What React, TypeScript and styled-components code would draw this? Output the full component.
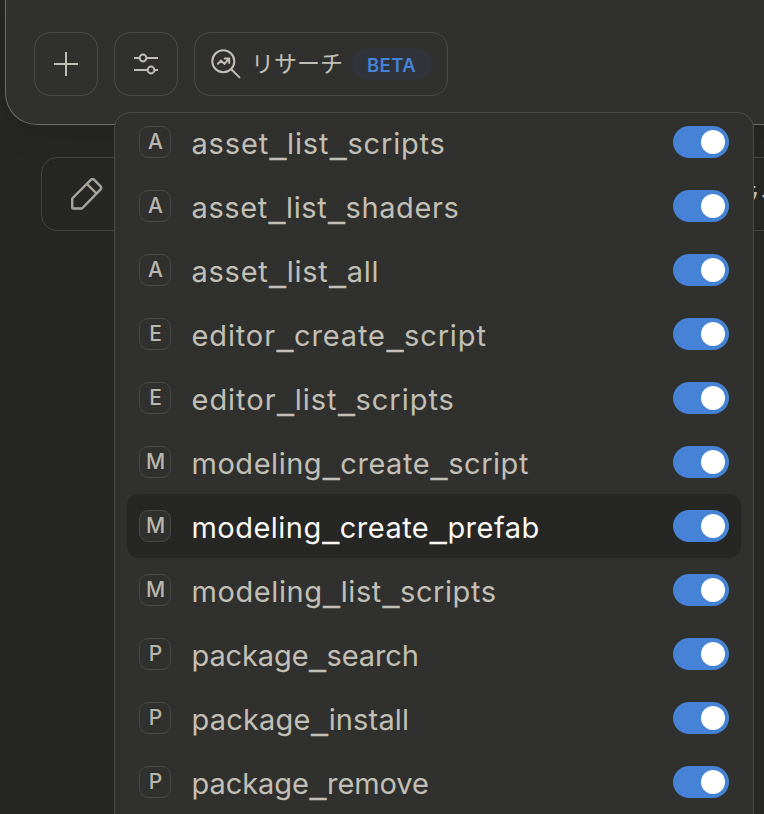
import React from "react";
import styled, { createGlobalStyle } from "styled-components";

const Global = createGlobalStyle`
  * { box-sizing: border-box; }
  body { margin: 0; background: #262624; overflow: hidden; }
`;

const Page = styled.main`
  position: relative;
  width: 764px;
  height: 814px;
  overflow: hidden;
  background: #262624;
  color: #c2c0b6;
  font-family: Inter, "Noto Sans CJK JP", sans-serif;
`;

const Composer = styled.section`
  display: flex;
  align-items: flex-end;
  gap: 16px;
  width: 800px;
  height: 125px;
  margin-left: 5px;
  padding: 0 28px 28px;
  background: #30302e;
  border: 1px solid #6a6a66;
  border-top: 0;
  border-bottom-left-radius: 32px;
  box-shadow: 0 4px 40px rgba(0, 0, 0, 0.09);
`;

const ToolButton = styled.button<{ $wide?: boolean }>`
  display: flex;
  align-items: center;
  justify-content: ${(p) => (p.$wide ? "flex-start" : "center")};
  width: ${(p) => (p.$wide ? 254 : 64)}px;
  height: 64px;
  padding: ${(p) => (p.$wide ? "0 15px" : "0")};
  border: 1px solid #4a4a47;
  border-radius: 16px;
  background: transparent;
  color: #c2c0b6;
  font: inherit;
  svg { flex: none; }
`;

const ToolLabel = styled.span`
  width: 95px;
  margin-left: 9px;
  padding-bottom: 4px;
  font: 400 23px/32px "Noto Sans CJK JP", sans-serif;
  white-space: nowrap;
  text-align: left;
`;

const Beta = styled.span`
  display: flex;
  align-items: center;
  width: 80px;
  height: 32px;
  margin-left: 6px;
  padding: 1px 0 0 15px;
  border-radius: 16px;
  background: #30343a;
  color: #4682d5;
  font-size: 18.5px;
  font-weight: 600;
  letter-spacing: 0.4px;
`;

const Suggestion = styled.section`
  display: flex;
  align-items: center;
  justify-content: space-between;
  width: 800px;
  height: 74px;
  margin: 32px 0 0 41px;
  padding: 0 28px 0 29px;
  border: 1px solid #434340;
  border-radius: 16px;
  color: #a8a69d;
`;

const SuggestionText = styled.span`
  width: 76px;
  color: #c2c0b6;
  font: 400 24px/32px "Noto Sans CJK JP", sans-serif;
  white-space: nowrap;
`;

const Menu = styled.div`
  position: absolute;
  left: 114px;
  top: 112px;
  width: 640px;
  height: 720px;
  overflow: hidden;
  padding: 0 12px;
  border: 1px solid #4a4a47;
  border-radius: 16px;
  background: #30302e;
`;

const List = styled.ul`
  margin: -3px 0 0;
  padding: 0;
  list-style: none;
`;

const Row = styled.li<{ $active?: boolean }>`
  display: flex;
  align-items: center;
  height: 64px;
  padding: 0 12px;
  border-radius: 12px;
  background: ${(p) => (p.$active ? "#262624" : "transparent")};
  color: ${(p) => (p.$active ? "#faf9f5" : "#c2c0b6")};
`;

const Initial = styled.span`
  display: grid;
  place-items: center;
  width: 32px;
  height: 32px;
  padding-left: 1px;
  border: 1px solid #484845;
  border-radius: 9px;
  background: #30302e;
  color: #b9b7ad;
  font-size: 21px;
  font-weight: 450;
  line-height: 30px;
`;

const ToolName = styled.span<{ $spacing: number }>`
  flex: 1;
  margin-left: 20.5px;
  padding-top: 3px;
  font-size: 29px;
  line-height: 40px;
  letter-spacing: ${(p) => p.$spacing}px;
  white-space: nowrap;
`;

const Underscore = styled.span`
  margin: 0 1px;
  font-family: "Liberation Sans", sans-serif;
  line-height: 1;
  letter-spacing: 0;
  -webkit-text-stroke: 0.5px currentColor;
`;

const Switch = styled.span`
  display: flex;
  justify-content: flex-end;
  width: 56px;
  height: 32px;
  padding: 4px;
  border-radius: 16px;
  background: #4682d5;
`;

const Knob = styled.span`
  width: 24px;
  height: 24px;
  border-radius: 50%;
  background: #fff;
`;

const tools = [
  { name: "asset_list_scripts", spacing: 0.83 },
  { name: "asset_list_shaders", spacing: 0.62 },
  { name: "asset_list_all", spacing: 0.75 },
  { name: "editor_create_script", spacing: 0.87 },
  { name: "editor_list_scripts", spacing: 0.97 },
  { name: "modeling_create_script", spacing: 0.53 },
  { name: "modeling_create_prefab", spacing: 0.47, active: true },
  { name: "modeling_list_scripts", spacing: 0.58 },
  { name: "package_search", spacing: -0.12 },
  { name: "package_install", spacing: 0.17 },
  { name: "package_remove", spacing: -0.06 },
];

const PlusIcon = () => (
  <svg width="24" height="24" fill="none" stroke="currentColor" strokeWidth="2">
    <path d="M12 0v24M0 12h24" />
  </svg>
);

const SlidersIcon = () => (
  <svg width="24" height="24" fill="none" stroke="currentColor" strokeWidth="2">
    <path d="M0 6h5.5M12.5 6H24M0 18h13.5M20.5 18H24" />
    <circle cx="9" cy="6" r="3.4" />
    <circle cx="17" cy="18" r="3.4" />
  </svg>
);

const ResearchIcon = () => (
  <svg width="32" height="32" fill="none" stroke="currentColor" strokeWidth="2" strokeLinecap="round">
    <circle cx="13.3" cy="13.2" r="11" />
    <path d="m21.3 21.2 8.2 8.2M8 15.7l3-3 3.5 3.2 4.500-5.200M14.700 10.500h4.500v4.500" />
  </svg>
);

const PencilIcon = () => (
  <svg width="32" height="32" fill="none" stroke="currentColor" strokeWidth="2.4" strokeLinejoin="round">
    <path d="M1.2 20.500 20 1.700q1.500-1.300 3 0l6.600 6.600q1.300 1.500 0 3L11 30.500H2.200q-1 0-1-1zM16 6l9.500 9.500" />
  </svg>
);

const Name = ({ text }: { text: string }) => (
  <>
    {text.split("_").map((word, i) => (
      <React.Fragment key={i}>
        {i > 0 && <Underscore>_</Underscore>}
        {word}
      </React.Fragment>
    ))}
  </>
);

export default function App() {
  return (
    <Page>
      <Global />
      <Composer>
        <ToolButton aria-label="Add"><PlusIcon /></ToolButton>
        <ToolButton aria-label="Tools"><SlidersIcon /></ToolButton>
        <ToolButton $wide>
          <ResearchIcon />
          <ToolLabel>リサーチ</ToolLabel>
          <Beta>BETA</Beta>
        </ToolButton>
      </Composer>
      <Suggestion>
        <PencilIcon />
        <SuggestionText>ライフ</SuggestionText>
      </Suggestion>
      <Menu>
        <List>
          {tools.map((t) => (
            <Row key={t.name} $active={t.active}>
              <Initial>{t.name[0].toUpperCase()}</Initial>
              <ToolName $spacing={t.spacing}><Name text={t.name} /></ToolName>
              <Switch role="switch" aria-checked="true"><Knob /></Switch>
            </Row>
          ))}
        </List>
      </Menu>
    </Page>
  );
}
